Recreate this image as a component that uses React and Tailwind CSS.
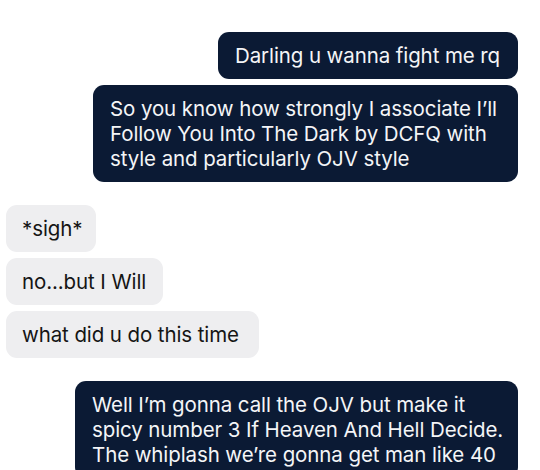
import React from "react";

const messages = [
  { id: 1, mine: true, w: "w-[300px]", lines: ["Darling u wanna fight me rq"] },
  {
    id: 2,
    mine: true,
    w: "w-[425px]",
    lines: [
      "So you know how strongly I associate I\u2019ll",
      "Follow You Into The Dark by DCFQ with",
      "style and particularly OJV style",
    ],
  },
  { id: 3, mine: false, w: "w-[90px]", lines: ["*sigh*"] },
  { id: 4, mine: false, w: "w-[157px]", lines: ["no...but I Will"] },
  { id: 5, mine: false, w: "w-[253px]", lines: ["what did u do this time"] },
  {
    id: 6,
    mine: true,
    w: "w-[443px]",
    lines: [
      "Well I\u2019m gonna call the OJV but make it",
      "spicy number 3 If Heaven And Hell Decide.",
      "The whiplash we\u2019re gonna get man like 40",
    ],
  },
];

function Bubble({ msg }) {
  return (
    <div
      className={
        msg.mine
          ? "self-end rounded-[11px] bg-[#0b1a34] px-[17px] py-[11px] text-[#f4f5f7] " + msg.w
          : "self-start rounded-[11px] bg-[#eeeef0] px-[16px] py-[11px] text-[#151515] " + msg.w
      }
    >
      {msg.lines.map((line, i) => (
        <div key={i} className="whitespace-nowrap text-[20.5px] leading-[25px] tracking-[-0.1px]">
          {line}
        </div>
      ))}
    </div>
  );
}

export default function App() {
  const groups = [messages.slice(0, 2), messages.slice(2, 5), messages.slice(5)];

  return (
    <div
      className="h-[470px] w-[540px] overflow-hidden bg-white pl-[6px] pr-[22px] pt-[32px]"
      style={{ fontFamily: "Inter, 'Noto Sans', sans-serif" }}
    >
      <div className="flex flex-col gap-[23px]">
        {groups.map((group, gi) => (
          <div key={gi} className="flex flex-col gap-[6px]">
            {group.map((msg) => (
              <Bubble key={msg.id} msg={msg} />
            ))}
          </div>
        ))}
      </div>
    </div>
  );
}
